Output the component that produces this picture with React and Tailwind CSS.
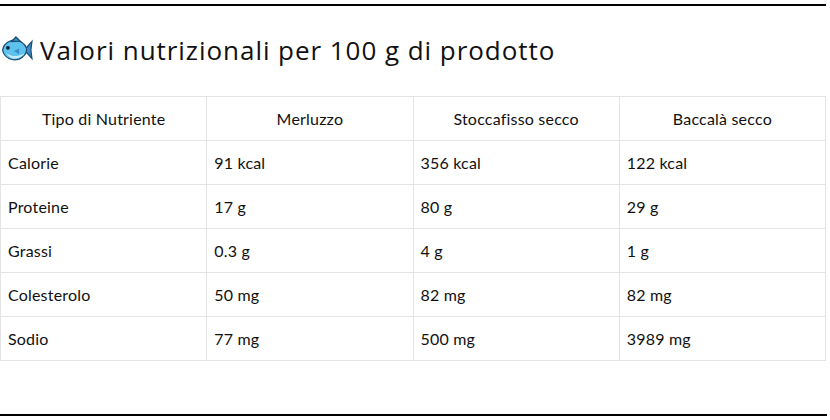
import React from "react";

const COLS = ["Tipo di Nutriente", "Merluzzo", "Stoccafisso secco", "Baccalà secco"];
const ROWS = [
  ["Calorie", "91 kcal", "356 kcal", "122 kcal"],
  ["Proteine", "17 g", "80 g", "29 g"],
  ["Grassi", "0.3 g", "4 g", "1 g"],
  ["Colesterolo", "50 mg", "82 mg", "82 mg"],
  ["Sodio", "77 mg", "500 mg", "3989 mg"],
];

function Fish() {
  return (
    <svg width="32" height="28" viewBox="0 0 30 26" className="shrink-0">
      {/* tail */}
      <path d="M22 13 L29 5 L28 13 L29 21 Z" fill="#3b8fc9" stroke="#1d4f75" strokeWidth="1.2" />
      {/* body */}
      <path d="M1.5 13 C3 5 11 2.5 17 4.5 C21 6.5 24 10 24 13 C24 16 21 19.5 17 21.5 C11 23.5 3 21 1.5 13 Z" fill="#5ec2ee" stroke="#1d4f75" strokeWidth="1.2" />
      {/* belly */}
      <path d="M5 16 C10 19.5 16 19.5 22 16 C20 19.5 15 21.5 11 21 C8 20 6 18 5 16 Z" fill="#c9ecfa" />
      {/* fin */}
      <path d="M10 5 L14 0.8 L18 4.8 Z" fill="#3b8fc9" stroke="#1d4f75" strokeWidth="1.2" />
      <path d="M12 14 L17 11.5 L17 17 Z" fill="#3b8fc9" />
      <circle cx="6.5" cy="11" r="1.8" fill="#0b2033" />
    </svg>
  );
}

export default function App() {
  return (
    <div className="w-[830px] h-[420px] bg-white pt-1" style={{ fontFamily: "Lato, sans-serif" }}>
      <div className="w-[826px] h-[2px] bg-black" />
      <div className="flex items-center gap-[7px] pl-[1px] mt-[30px] h-[28px]">
        <Fish />
        <h2 className="text-[26px] leading-none text-[#111] tracking-[0.95px]" style={{ fontFamily: "'Open Sans', sans-serif" }}>
          Valori nutrizionali per 100 g di prodotto
        </h2>
      </div>
      <table className="mt-[32px] w-[826px] border-collapse table-fixed text-[16px] tracking-[0.2px] text-[#111]">
        <thead>
          <tr className="h-[44px]">
            {COLS.map((c) => (
              <th key={c} className="border border-[#e3e3e3] font-normal text-center px-2">
                {c}
              </th>
            ))}
          </tr>
        </thead>
        <tbody>
          {ROWS.map((r) => (
            <tr key={r[0]} className="h-[44px]">
              {r.map((v, i) => (
                <td key={i} className="border border-[#e3e3e3] px-[7px]">
                  {v}
                </td>
              ))}
            </tr>
          ))}
        </tbody>
      </table>
      <div className="mt-[53px] w-[827px] h-[2px] bg-black" />
    </div>
  );
}
